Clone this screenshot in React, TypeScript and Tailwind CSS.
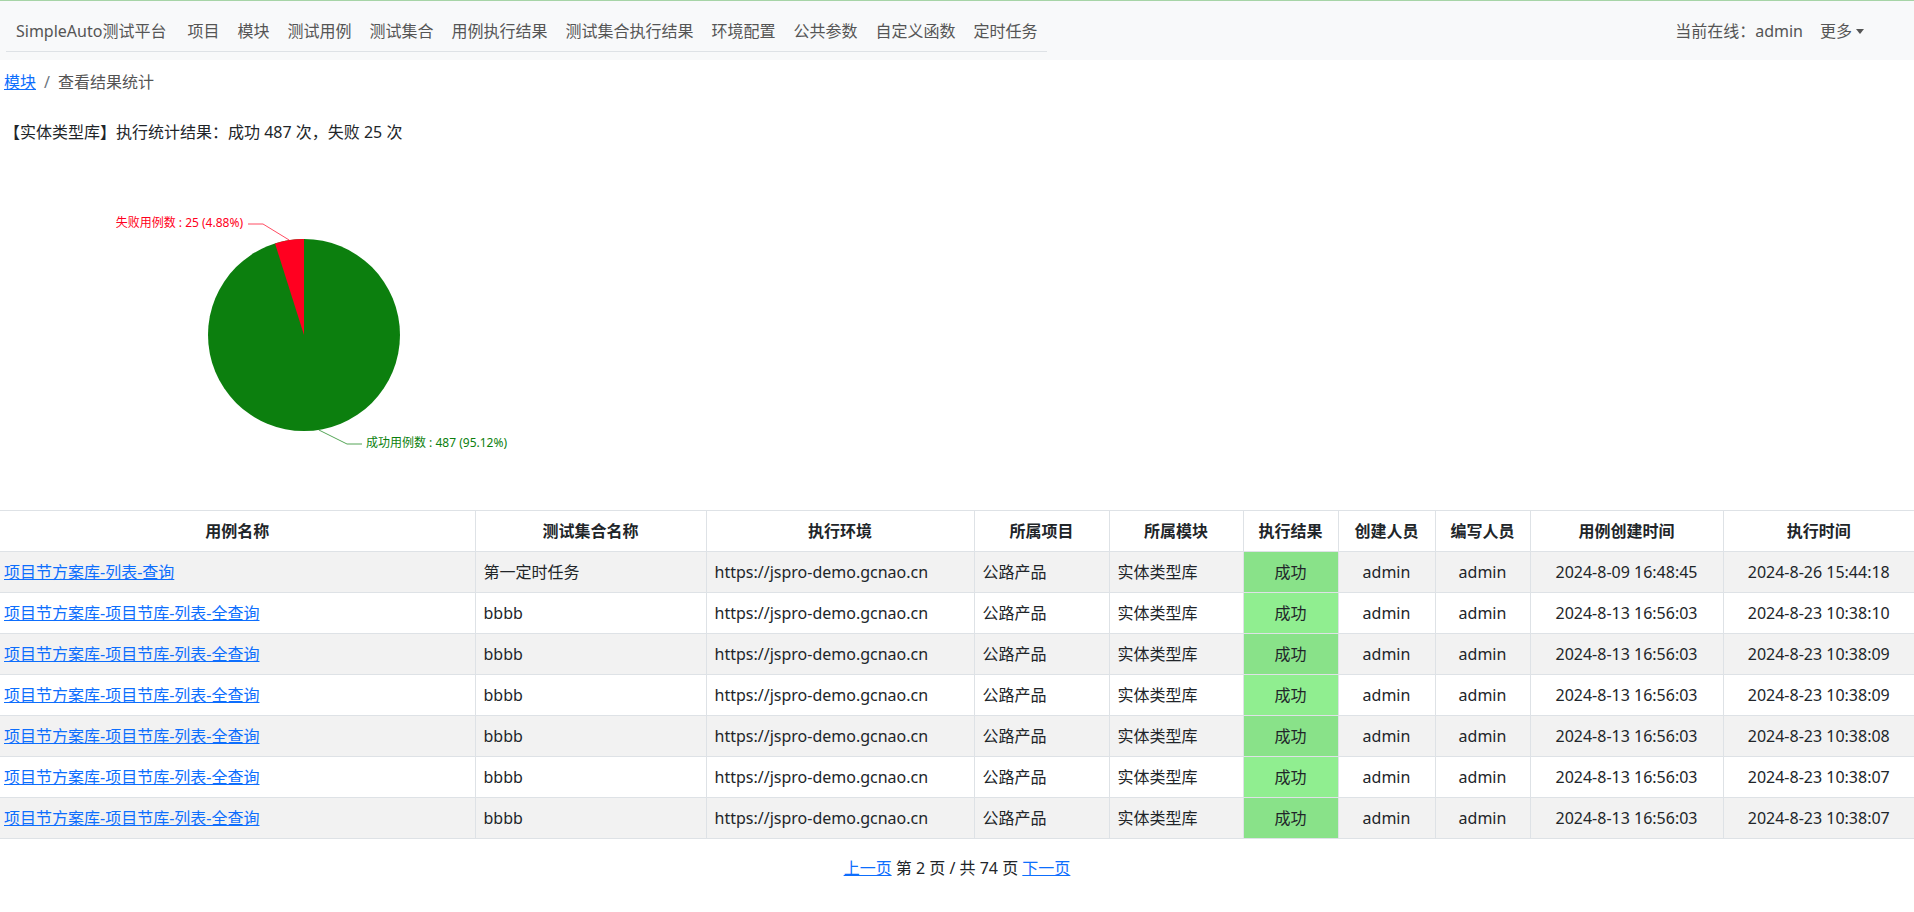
import React from 'react';

const navItems = ['项目', '模块', '测试用例', '测试集合', '用例执行结果', '测试集合执行结果', '环境配置', '公共参数', '自定义函数', '定时任务'];

const rows = [
  { name: '项目节方案库-列表-查询', suite: '第一定时任务', created: '2024-8-09 16:48:45', run: '2024-8-26 15:44:18' },
  { name: '项目节方案库-项目节库-列表-全查询', suite: 'bbbb', created: '2024-8-13 16:56:03', run: '2024-8-23 10:38:10' },
  { name: '项目节方案库-项目节库-列表-全查询', suite: 'bbbb', created: '2024-8-13 16:56:03', run: '2024-8-23 10:38:09' },
  { name: '项目节方案库-项目节库-列表-全查询', suite: 'bbbb', created: '2024-8-13 16:56:03', run: '2024-8-23 10:38:09' },
  { name: '项目节方案库-项目节库-列表-全查询', suite: 'bbbb', created: '2024-8-13 16:56:03', run: '2024-8-23 10:38:08' },
  { name: '项目节方案库-项目节库-列表-全查询', suite: 'bbbb', created: '2024-8-13 16:56:03', run: '2024-8-23 10:38:07' },
  { name: '项目节方案库-项目节库-列表-全查询', suite: 'bbbb', created: '2024-8-13 16:56:03', run: '2024-8-23 10:38:07' },
];

const headers = ['用例名称', '测试集合名称', '执行环境', '所属项目', '所属模块', '执行结果', '创建人员', '编写人员', '用例创建时间', '执行时间'];
const widths = [475, 231, 268, 135, 134, 95, 97, 95, 193, 191];

function PieChart() {
  // center 304,191  r 96 ; fail slice 4.88%
  return (
    <svg width="600" height="366" className="block">
      <circle cx="304" cy="191" r="96" fill="#0c7f0e" />
      <path d="M304 191 L304 95 A96 96 0 0 0 275.02 99.47 Z" fill="#ff0020" />
      {/* fail label */}
      <polyline points="289.3,96.1 263,80 248,80" fill="none" stroke="#ff0020" strokeOpacity="0.7" strokeWidth="1" />
      <text x="243" y="80" textAnchor="end" dominantBaseline="middle" fontSize="12" fill="#ff0020">
        失败用例数 : 25 (4.88%)
      </text>
      {/* success label */}
      <polyline points="318.7,285.9 347,300 362,300" fill="none" stroke="#0c7f0e" strokeOpacity="0.7" strokeWidth="1" />
      <text x="366" y="300" dominantBaseline="middle" fontSize="12" fill="#0c7f0e">
        成功用例数 : 487 (95.12%)
      </text>
    </svg>
  );
}

export default function App() {
  return (
    <div className="min-h-screen bg-white text-[#212529] text-base leading-6 font-['Noto_Sans','Noto_Sans_CJK_SC',sans-serif]">
      {/* ─── navbar ─────────────────────────────── */}
      <nav className="h-[60px] bg-[#f8f9fa] border-t border-[#a6d4a6] flex items-start justify-between">
        <ul className="flex ml-[6px] mt-[10px] border-b border-[#dee2e6]">
          <li className="pl-[10px] pr-[12px] py-2 text-[#555]">SimpleAuto测试平台</li>
          {navItems.map((n) => (
            <li key={n} className="px-[9px] py-2 text-[#555]">{n}</li>
          ))}
        </ul>
        <div className="flex items-center h-10 mt-[10px] pr-[50px] text-[#555]">
          <span>当前在线：admin</span>
          <span className="ml-[17px] flex items-center">
            更多
            <span className="ml-1 w-0 h-0 border-t-[5px] border-t-[#555] border-x-[4px] border-x-transparent" />
          </span>
        </div>
      </nav>

      {/* ─── breadcrumb ─────────────────────────── */}
      <div className="mt-[10px] pl-1 flex">
        <a href="#" className="text-[#0d6efd] underline">模块</a>
        <span className="px-2 text-[#6c757d]">/</span>
        <span className="text-[#555]">查看结果统计</span>
      </div>

      <div className="mt-[26px] pl-1">【实体类型库】执行统计结果：成功 487 次，失败 25 次</div>

      <PieChart />

      {/* ─── table ──────────────────────────────── */}
      <table className="w-full table-fixed border-collapse">
        <colgroup>
          {widths.map((w, i) => (
            <col key={i} width={w} />
          ))}
        </colgroup>
        <thead>
          <tr>
            {headers.map((h, i) => (
              <th
                key={h}
                className={`border border-[#dee2e6] py-2 px-2 font-bold text-center ${i === 0 ? 'border-l-0' : ''} ${i === headers.length - 1 ? 'border-r-0' : ''}`}
              >
                {h}
              </th>
            ))}
          </tr>
        </thead>
        <tbody>
          {rows.map((r, idx) => {
            const odd = idx % 2 === 0;
            const bg = odd ? 'bg-[#f2f2f2]' : 'bg-white';
            const cell = 'border border-[#dee2e6] py-2 whitespace-nowrap overflow-hidden';
            return (
              <tr key={idx} className={bg}>
                <td className={`${cell} border-l-0 pl-1 pr-2`}>
                  <a href="#" className="text-[#0d6efd] underline">{r.name}</a>
                </td>
                <td className={`${cell} px-2`}>{r.suite}</td>
                <td className={`${cell} px-2`}>https://jspro-demo.gcnao.cn</td>
                <td className={`${cell} px-2`}>公路产品</td>
                <td className={`${cell} px-2`}>实体类型库</td>
                <td className={`${cell} px-2 text-center ${odd ? 'bg-[#89e289]' : 'bg-[#90ee90]'}`}>成功</td>
                <td className={`${cell} px-2 text-center`}>admin</td>
                <td className={`${cell} px-2 text-center`}>admin</td>
                <td className={`${cell} px-2 text-center`}>{r.created}</td>
                <td className={`${cell} border-r-0 px-2 text-center`}>{r.run}</td>
              </tr>
            );
          })}
        </tbody>
      </table>

      {/* ─── pagination ─────────────────────────── */}
      <div className="mt-[17px] text-center">
        <a href="#" className="text-[#0d6efd] underline">上一页</a>
        <span> 第 2 页 / 共 74 页 </span>
        <a href="#" className="text-[#0d6efd] underline">下一页</a>
      </div>
    </div>
  );
}
